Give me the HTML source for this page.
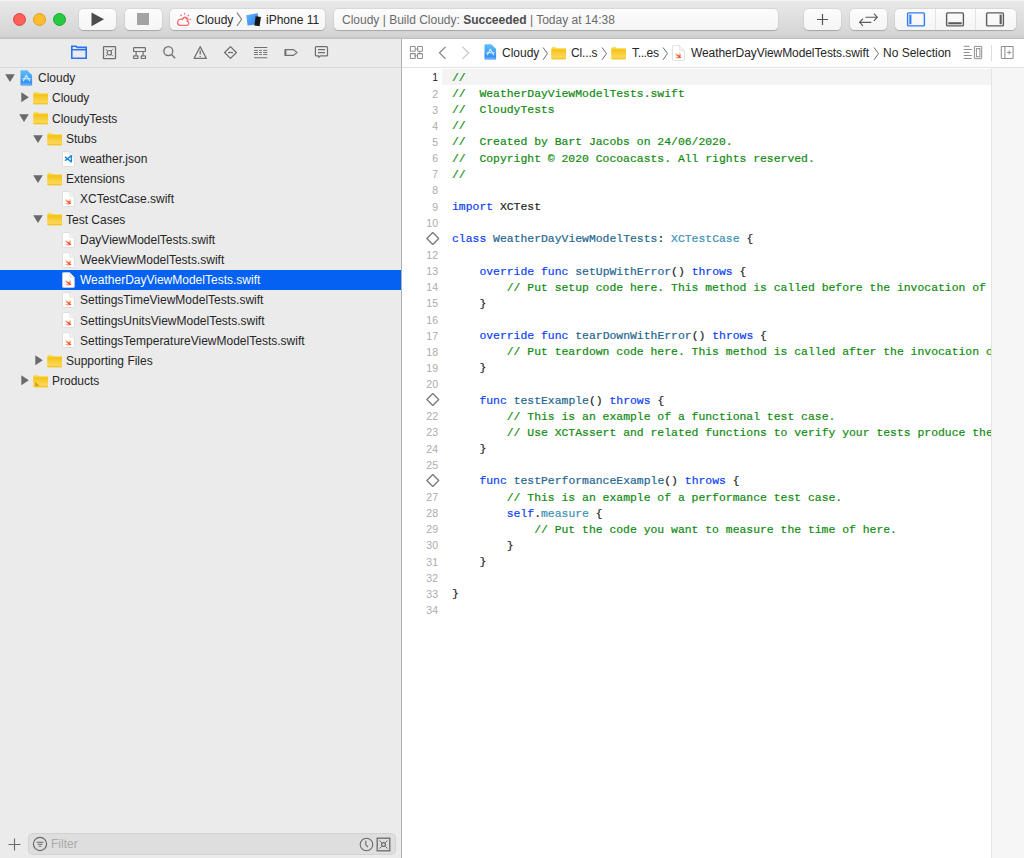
<!DOCTYPE html><html><head><meta charset="utf-8"><style>
*{margin:0;padding:0;box-sizing:border-box}
html,body{width:1024px;height:858px;overflow:hidden;background:#ebebeb;font-family:"Liberation Sans",sans-serif;}
.a{position:absolute}
#tb{position:absolute;left:0;top:0;width:1024px;height:39px;background:linear-gradient(#e9e9e9 0%,#d5d5d5 92%,#cacaca 100%);border-bottom:1px solid #c0c0c0}
#tb .hl{position:absolute;left:0;top:0;width:1024px;height:1px;background:#f2f2f2}
.light{position:absolute;top:13px;width:13px;height:13px;border-radius:50%}
.btn{position:absolute;top:8.7px;height:21.5px;background:linear-gradient(#fcfcfc,#f5f5f5);border-radius:4.5px;box-shadow:0 0 0 0.5px rgba(0,0,0,0.07),0 0.8px 0.9px rgba(0,0,0,0.2)}
.tt{position:absolute;font-size:12px;line-height:14px;white-space:nowrap}
#side{position:absolute;left:0;top:39px;width:401px;height:819px;background:#ebebeb}
#divv{position:absolute;left:401px;top:39px;width:1px;height:819px;background:#b0b0b0}
#navbar{position:absolute;left:0;top:39px;width:401px;height:29px;border-bottom:1px solid #d8d8d8}
.row{position:absolute;left:0;width:401px;height:20px}
.row .t{position:absolute;top:3px;font-size:12px;line-height:14px;color:#262626;white-space:nowrap}
#ed{position:absolute;left:402px;top:39px;width:622px;height:819px;background:#fff}
#jb{position:absolute;left:402px;top:39px;width:622px;height:29px;border-bottom:1px solid #e3e3e3;background:#fff}
#mini{position:absolute;left:991px;top:68px;width:33px;height:790px;background:#f6f6f6;border-left:1px solid #e4e4e4}
#curl{position:absolute;left:442px;top:69px;width:549px;height:16px;background:#f4f4f4}
.code{position:absolute;left:452px;font-family:"Liberation Mono",monospace;font-size:11.425px;white-space:pre;color:#1e1e1e;-webkit-text-stroke:0.2px currentColor}
.ln{position:absolute;left:410px;width:28px;text-align:right;font-size:10.5px;color:#a3a3a3;white-space:nowrap}
.k{color:#0b3ff5}
.c{color:#0f8a10}
.d{color:#24668f}
.o{color:#3a90b4}
</style></head><body><div id="tb"><div class="hl"></div></div>
<div class="light" style="left:13px;background:#fe5f57;border:0.5px solid #e2463f"></div>
<div class="light" style="left:33px;background:#febc2e;border:0.5px solid #e1a116"></div>
<div class="light" style="left:53px;background:#28c840;border:0.5px solid #1aab29"></div>
<div class="btn" style="left:79px;width:37px"></div>
<svg class="a" style="left:91px;top:12px" width="14" height="15"><path d="M0.5 0.5 L13 7.3 L0.5 14.2Z" fill="#4b4b4b"/></svg>
<div class="btn" style="left:125px;width:37px"></div>
<div class="a" style="left:137px;top:13px;width:12px;height:12px;background:#a3a3a3"></div>
<div class="btn" style="left:170px;width:155px"></div>
<div class="a" style="left:176px;top:11px;width:16px;height:16px;background:#fff"></div>
<svg class="a" style="left:176px;top:11px" width="16" height="16" viewBox="0 0 16 16"><g fill="none" stroke="#f76a67" stroke-width="1.25" stroke-linecap="round"><path d="M3.6 14.4H10.6A2.1 2.1 0 0 0 11.3 10.3A2.6 2.6 0 0 0 6.4 8.4A3.4 3.4 0 0 0 1.6 11.3A2.9 2.9 0 0 0 3.6 14.4Z"/><path d="M6.9 7.8A2.5 2.5 0 0 1 11.6 9.9"/><path d="M8.7 2.3V3M4.9 4.1L5.4 4.7M12.6 4.2L12.1 4.8M14 8.3H14.7"/></g></svg>
<div class="tt" style="left:196px;top:13px;color:#262626">Cloudy</div>
<svg class="a" style="left:236px;top:12px" width="7" height="15"><path d="M1 0.6 L5.6 7.3 L1 14" fill="none" stroke="#7a7a7a" stroke-width="1.05"/></svg>
<svg class="a" style="left:245px;top:12px" width="18" height="15" viewBox="0 0 18 15"><defs><linearGradient id="ig" x1="0" y1="0" x2="1" y2="1"><stop offset="0" stop-color="#62b5fb"/><stop offset="1" stop-color="#2f7ff0"/></linearGradient></defs><path d="M1.3 3.2L12.8 1.2L14.2 12L2.6 13.6Z" fill="url(#ig)"/><path d="M10.6 4.3L15.9 5L14.6 14.2L9.4 13.5Z" fill="#161616"/></svg>
<div class="tt" style="left:266px;top:13px;color:#262626">iPhone 11</div>
<div class="btn" style="left:334px;width:444px"></div>
<div class="tt" style="left:342px;top:13px;color:#6b6b6b">Cloudy | Build Cloudy: <b style="color:#4d4d4d">Succeeded</b> | Today at 14:38</div>
<div class="btn" style="left:804px;width:37px"></div>
<svg class="a" style="left:816px;top:13px" width="13" height="13"><path d="M6.5 1V12M1 6.5H12" stroke="#555" stroke-width="1.2"/></svg>
<div class="btn" style="left:850px;width:37px"></div>
<svg class="a" style="left:857px;top:11px" width="24" height="17" viewBox="0 0 24 17"><g fill="none" stroke="#5a5a5a" stroke-width="1.15"><path d="M8.5 6.2H20.3M16.9 2.6L20.3 6.2L16.9 9.8"/><path d="M14.3 11.3H2.6M6 7.7L2.6 11.3L6 14.9"/></g></svg>
<div class="btn" style="left:895px;width:121px"></div>
<div class="a" style="left:935px;top:9px;width:1px;height:21px;background:#e3e3e3"></div>
<div class="a" style="left:975px;top:9px;width:1px;height:21px;background:#e3e3e3"></div>
<svg class="a" style="left:906px;top:12px" width="20" height="16"><rect x="1.6" y="0.9" width="16.8" height="13" rx="1" fill="none" stroke="#2f7cf6" stroke-width="1.4"/><rect x="3.3" y="2.6" width="2.1" height="9.6" fill="#2f7cf6"/></svg>
<svg class="a" style="left:945px;top:12px" width="20" height="16"><rect x="1.6" y="0.9" width="16.8" height="13" rx="1" fill="none" stroke="#5c5c5c" stroke-width="1.4"/><rect x="3.3" y="10.2" width="13.4" height="2.1" fill="#5c5c5c"/></svg>
<svg class="a" style="left:985px;top:12px" width="20" height="16"><rect x="1.6" y="0.9" width="16.8" height="13" rx="1" fill="none" stroke="#5c5c5c" stroke-width="1.4"/><rect x="14.6" y="2.6" width="2.1" height="9.6" fill="#5c5c5c"/></svg>
<div id="side"></div>
<div id="navbar"></div>
<svg class="a" style="left:70px;top:44px" width="18" height="16" viewBox="0 0 18 16"><path d="M1.8 14.2V2.2H6L7.2 3.4H16.2V14.2Z M1.8 5.8H16.2" fill="none" stroke="#2a72f5" stroke-width="1.6"/></svg>
<svg class="a" style="left:102px;top:45px" width="15" height="15" viewBox="0 0 15 15"><g fill="none" stroke="#6f6f6f"><rect x="1.5" y="1.7" width="12" height="12" rx="0.4" stroke-width="1.3"/><circle cx="7.3" cy="7.7" r="2.2" stroke-width="1.2"/><path d="M3.8 4.2L5.6 6M10.8 4.2L9 6M3.8 11.2L5.6 9.4M10.8 11.2L9 9.4" stroke-width="1"/></g></svg>
<svg class="a" style="left:132px;top:46px" width="15" height="14" viewBox="0 0 15 14"><g fill="none" stroke="#6f6f6f" stroke-width="1.2"><rect x="1.6" y="1.7" width="11.8" height="3.8" rx=".6"/><path d="M4.1 5.5V9.2M11.1 5.5V9.2"/><rect x="1.6" y="9.8" width="4.3" height="2.7" rx=".6"/><rect x="9.2" y="9.8" width="4.3" height="2.7" rx=".6"/></g></svg>
<svg class="a" style="left:162px;top:45px" width="15" height="15" viewBox="0 0 15 15"><g fill="none" stroke="#6f6f6f" stroke-width="1.3"><circle cx="6.3" cy="6.1" r="4.5"/><path d="M9.5 9.5L13.2 13.2"/></g></svg>
<svg class="a" style="left:193px;top:45px" width="15" height="15" viewBox="0 0 15 15"><g fill="none" stroke="#6f6f6f" stroke-width="1.3" stroke-linejoin="round"><path d="M7.2 1.7L13.3 13.3H1.1Z"/><path d="M7.2 5.4V9.6M7.2 11V11.9"/></g></svg>
<svg class="a" style="left:223px;top:45px" width="15" height="15" viewBox="0 0 15 15"><g fill="none" stroke="#6f6f6f" stroke-width="1.3" stroke-linejoin="round"><path d="M7.5 1.6L13.4 7.5L7.5 13.4L1.6 7.5Z"/><path d="M5 7.5H10"/></g></svg>
<svg class="a" style="left:253px;top:46px" width="15" height="13" viewBox="0 0 15 13"><g fill="none" stroke="#6f6f6f"><path d="M1 1.5H14.3M1 11.7H14.3" stroke-width="1.1"/><path d="M1 4.4H5M6.1 4.4H8.9M10.2 4.4H14.3M1 6.5H5M6.1 6.5H8.9M10.2 6.5H14.3M1 8.5H5M6.1 8.5H8.9M10.2 8.5H14.3" stroke-width="0.95"/></g></svg>
<svg class="a" style="left:284px;top:48px" width="15" height="10" viewBox="0 0 15 10"><path d="M1.1 1.6H9.5L13 4.5L9.5 7.4H1.1Z" fill="none" stroke="#6f6f6f" stroke-width="1.2" stroke-linejoin="round"/><path d="M1.6 1.6V7.4" stroke="#6f6f6f" stroke-width="1.6"/></svg>
<svg class="a" style="left:314px;top:45px" width="15" height="15" viewBox="0 0 15 15"><g fill="none" stroke="#6f6f6f" stroke-width="1.2" stroke-linejoin="round"><path d="M2.3 1.6H12.6Q13.5 1.6 13.5 2.5V10Q13.5 10.9 12.6 10.9H6.5L4.8 12.3V10.9H2.3Q1.4 10.9 1.4 10V2.5Q1.4 1.6 2.3 1.6Z"/><path d="M4 4.6H11M4 7.7H11"/></g></svg>
<svg class="a" style="left:5px;top:74.0px" width="10" height="9"><path d="M0.2 0.3H9.8L5 8Z" fill="#6a6a6a"/></svg>
<svg class="a" style="left:20px;top:70.0px" width="13" height="16" viewBox="0 0 13 16"><defs><linearGradient id="pg" x1="0" y1="0" x2="0" y2="1"><stop offset="0" stop-color="#5fbdf6"/><stop offset="1" stop-color="#2c86f2"/></linearGradient></defs><path d="M1.3 0.3H7.2L12.1 5.1V14.7Q12.1 15.5 11.3 15.5H1.3Q0.5 15.5 0.5 14.7V1.1Q0.5 0.3 1.3 0.3Z" fill="url(#pg)"/><path d="M6.3 5.2L3.4 10.8M6.3 5.2L9.6 10.8M2.6 8.8H10.3" fill="none" stroke="#d8ecff" stroke-width="1.1" stroke-linecap="round"/><path d="M1.2 14.1H11.4" stroke="#8ccafb" stroke-width="0.9"/></svg>
<div class="a" style="left:38px;top:71.30px;font-size:12px;line-height:14px;color:#262626;white-space:nowrap">Cloudy</div>
<svg class="a" style="left:21px;top:92.19px" width="9" height="11"><path d="M0.3 0.3V10.3L7.8 5.3Z" fill="#6a6a6a"/></svg>
<svg class="a" style="left:33px;top:92.19px" width="16" height="13" viewBox="0 0 16 13"><defs><linearGradient id="fg" x1="0" y1="0" x2="0" y2="1"><stop offset="0" stop-color="#f4c214"/><stop offset="0.8" stop-color="#fcd85a"/><stop offset="1" stop-color="#eebb08"/></linearGradient></defs><path d="M0.4 1.0Q0.4 0.2 1.2 0.2H5.0L6.0 1.3H14.2Q15.0 1.3 15.0 2.1V11.5Q15.0 12.3 14.2 12.3H1.2Q0.4 12.3 0.4 11.5Z" fill="#fad544"/><path d="M0.4 2.3H15.0V11.5Q15.0 12.3 14.2 12.3H1.2Q0.4 12.3 0.4 11.5Z" fill="url(#fg)"/></svg>
<div class="a" style="left:52px;top:91.49px;font-size:12px;line-height:14px;color:#262626;white-space:nowrap">Cloudy</div>
<svg class="a" style="left:19px;top:114.38px" width="10" height="9"><path d="M0.2 0.3H9.8L5 8Z" fill="#6a6a6a"/></svg>
<svg class="a" style="left:33px;top:112.38px" width="16" height="13" viewBox="0 0 16 13"><defs><linearGradient id="fg" x1="0" y1="0" x2="0" y2="1"><stop offset="0" stop-color="#f4c214"/><stop offset="0.8" stop-color="#fcd85a"/><stop offset="1" stop-color="#eebb08"/></linearGradient></defs><path d="M0.4 1.0Q0.4 0.2 1.2 0.2H5.0L6.0 1.3H14.2Q15.0 1.3 15.0 2.1V11.5Q15.0 12.3 14.2 12.3H1.2Q0.4 12.3 0.4 11.5Z" fill="#fad544"/><path d="M0.4 2.3H15.0V11.5Q15.0 12.3 14.2 12.3H1.2Q0.4 12.3 0.4 11.5Z" fill="url(#fg)"/></svg>
<div class="a" style="left:52px;top:111.68px;font-size:12px;line-height:14px;color:#262626;white-space:nowrap">CloudyTests</div>
<svg class="a" style="left:33px;top:134.57px" width="10" height="9"><path d="M0.2 0.3H9.8L5 8Z" fill="#6a6a6a"/></svg>
<svg class="a" style="left:47px;top:132.57px" width="16" height="13" viewBox="0 0 16 13"><defs><linearGradient id="fg" x1="0" y1="0" x2="0" y2="1"><stop offset="0" stop-color="#f4c214"/><stop offset="0.8" stop-color="#fcd85a"/><stop offset="1" stop-color="#eebb08"/></linearGradient></defs><path d="M0.4 1.0Q0.4 0.2 1.2 0.2H5.0L6.0 1.3H14.2Q15.0 1.3 15.0 2.1V11.5Q15.0 12.3 14.2 12.3H1.2Q0.4 12.3 0.4 11.5Z" fill="#fad544"/><path d="M0.4 2.3H15.0V11.5Q15.0 12.3 14.2 12.3H1.2Q0.4 12.3 0.4 11.5Z" fill="url(#fg)"/></svg>
<div class="a" style="left:66px;top:131.87px;font-size:12px;line-height:14px;color:#262626;white-space:nowrap">Stubs</div>
<svg class="a" style="left:62px;top:150.76px" width="13" height="16" viewBox="0 0 13 16"><path d="M1.3 0.6H7.6L12.4 5.4V14.7Q12.4 15.5 11.6 15.5H1.3Q0.5 15.5 0.5 14.7V1.4Q0.5 0.6 1.3 0.6Z" fill="#fff" stroke="#d4d4d4" stroke-width="0.7"/><path d="M7.6 0.6V4.6Q7.6 5.4 8.4 5.4H12.4" fill="#f4f4f4" stroke="#dadada" stroke-width="0.6"/><path d="M3 5.9L9.4 10.9V4.6L3 9.7" fill="none" stroke="#1b85de" stroke-width="1.35" stroke-linejoin="round"/></svg>
<div class="a" style="left:80px;top:152.06px;font-size:12px;line-height:14px;color:#262626;white-space:nowrap">weather.json</div>
<svg class="a" style="left:33px;top:174.95px" width="10" height="9"><path d="M0.2 0.3H9.8L5 8Z" fill="#6a6a6a"/></svg>
<svg class="a" style="left:47px;top:172.95px" width="16" height="13" viewBox="0 0 16 13"><defs><linearGradient id="fg" x1="0" y1="0" x2="0" y2="1"><stop offset="0" stop-color="#f4c214"/><stop offset="0.8" stop-color="#fcd85a"/><stop offset="1" stop-color="#eebb08"/></linearGradient></defs><path d="M0.4 1.0Q0.4 0.2 1.2 0.2H5.0L6.0 1.3H14.2Q15.0 1.3 15.0 2.1V11.5Q15.0 12.3 14.2 12.3H1.2Q0.4 12.3 0.4 11.5Z" fill="#fad544"/><path d="M0.4 2.3H15.0V11.5Q15.0 12.3 14.2 12.3H1.2Q0.4 12.3 0.4 11.5Z" fill="url(#fg)"/></svg>
<div class="a" style="left:66px;top:172.25px;font-size:12px;line-height:14px;color:#262626;white-space:nowrap">Extensions</div>
<svg class="a" style="left:62px;top:191.14000000000001px" width="13" height="16" viewBox="0 0 13 16"><path d="M1.3 0.6H7.6L12.4 5.4V14.7Q12.4 15.5 11.6 15.5H1.3Q0.5 15.5 0.5 14.7V1.4Q0.5 0.6 1.3 0.6Z" fill="#fff" stroke="#d4d4d4" stroke-width="0.7"/><path d="M7.6 0.6V4.6Q7.6 5.4 8.4 5.4H12.4" fill="#f4f4f4" stroke="#dadada" stroke-width="0.6"/><defs><linearGradient id="sg" x1="0" y1="0" x2="0" y2="1"><stop offset="0" stop-color="#f9a03f"/><stop offset="1" stop-color="#f2331f"/></linearGradient></defs><g transform="translate(2.4 6.3)"><path d="M5.9 5.7C6.6 4.6 6.3 2.6 4.9 0.8C5.4 2.2 5.4 3.5 4.8 4.3C3.6 3.5 1.6 1.8 0.6 0.7C1.4 1.8 2.5 3 3.4 3.8C2.3 3.2 1.1 2.3 0.3 1.6C1.4 3.5 3.3 5.4 4.9 5.9C3.8 6.5 2.1 6.4 0.3 5.6C1.7 6.8 3.6 7.4 5.1 6.8C5.8 6.5 6.5 6.6 6.9 7C7 6.5 6.6 5.9 5.9 5.7Z" fill="url(#sg)"/></g></svg>
<div class="a" style="left:80px;top:192.44px;font-size:12px;line-height:14px;color:#262626;white-space:nowrap">XCTestCase.swift</div>
<svg class="a" style="left:33px;top:215.33px" width="10" height="9"><path d="M0.2 0.3H9.8L5 8Z" fill="#6a6a6a"/></svg>
<svg class="a" style="left:47px;top:213.33px" width="16" height="13" viewBox="0 0 16 13"><defs><linearGradient id="fg" x1="0" y1="0" x2="0" y2="1"><stop offset="0" stop-color="#f4c214"/><stop offset="0.8" stop-color="#fcd85a"/><stop offset="1" stop-color="#eebb08"/></linearGradient></defs><path d="M0.4 1.0Q0.4 0.2 1.2 0.2H5.0L6.0 1.3H14.2Q15.0 1.3 15.0 2.1V11.5Q15.0 12.3 14.2 12.3H1.2Q0.4 12.3 0.4 11.5Z" fill="#fad544"/><path d="M0.4 2.3H15.0V11.5Q15.0 12.3 14.2 12.3H1.2Q0.4 12.3 0.4 11.5Z" fill="url(#fg)"/></svg>
<div class="a" style="left:66px;top:212.63px;font-size:12px;line-height:14px;color:#262626;white-space:nowrap">Test Cases</div>
<svg class="a" style="left:62px;top:231.52px" width="13" height="16" viewBox="0 0 13 16"><path d="M1.3 0.6H7.6L12.4 5.4V14.7Q12.4 15.5 11.6 15.5H1.3Q0.5 15.5 0.5 14.7V1.4Q0.5 0.6 1.3 0.6Z" fill="#fff" stroke="#d4d4d4" stroke-width="0.7"/><path d="M7.6 0.6V4.6Q7.6 5.4 8.4 5.4H12.4" fill="#f4f4f4" stroke="#dadada" stroke-width="0.6"/><defs><linearGradient id="sg" x1="0" y1="0" x2="0" y2="1"><stop offset="0" stop-color="#f9a03f"/><stop offset="1" stop-color="#f2331f"/></linearGradient></defs><g transform="translate(2.4 6.3)"><path d="M5.9 5.7C6.6 4.6 6.3 2.6 4.9 0.8C5.4 2.2 5.4 3.5 4.8 4.3C3.6 3.5 1.6 1.8 0.6 0.7C1.4 1.8 2.5 3 3.4 3.8C2.3 3.2 1.1 2.3 0.3 1.6C1.4 3.5 3.3 5.4 4.9 5.9C3.8 6.5 2.1 6.4 0.3 5.6C1.7 6.8 3.6 7.4 5.1 6.8C5.8 6.5 6.5 6.6 6.9 7C7 6.5 6.6 5.9 5.9 5.7Z" fill="url(#sg)"/></g></svg>
<div class="a" style="left:80px;top:232.82px;font-size:12px;line-height:14px;color:#262626;white-space:nowrap">DayViewModelTests.swift</div>
<svg class="a" style="left:62px;top:251.71px" width="13" height="16" viewBox="0 0 13 16"><path d="M1.3 0.6H7.6L12.4 5.4V14.7Q12.4 15.5 11.6 15.5H1.3Q0.5 15.5 0.5 14.7V1.4Q0.5 0.6 1.3 0.6Z" fill="#fff" stroke="#d4d4d4" stroke-width="0.7"/><path d="M7.6 0.6V4.6Q7.6 5.4 8.4 5.4H12.4" fill="#f4f4f4" stroke="#dadada" stroke-width="0.6"/><defs><linearGradient id="sg" x1="0" y1="0" x2="0" y2="1"><stop offset="0" stop-color="#f9a03f"/><stop offset="1" stop-color="#f2331f"/></linearGradient></defs><g transform="translate(2.4 6.3)"><path d="M5.9 5.7C6.6 4.6 6.3 2.6 4.9 0.8C5.4 2.2 5.4 3.5 4.8 4.3C3.6 3.5 1.6 1.8 0.6 0.7C1.4 1.8 2.5 3 3.4 3.8C2.3 3.2 1.1 2.3 0.3 1.6C1.4 3.5 3.3 5.4 4.9 5.9C3.8 6.5 2.1 6.4 0.3 5.6C1.7 6.8 3.6 7.4 5.1 6.8C5.8 6.5 6.5 6.6 6.9 7C7 6.5 6.6 5.9 5.9 5.7Z" fill="url(#sg)"/></g></svg>
<div class="a" style="left:80px;top:253.01px;font-size:12px;line-height:14px;color:#262626;white-space:nowrap">WeekViewModelTests.swift</div>
<div class="a" style="left:0;top:269.90px;width:401px;height:20px;background:#0461f1"></div>
<svg class="a" style="left:62px;top:271.9px" width="13" height="16" viewBox="0 0 13 16"><path d="M1.3 0.6H7.6L12.4 5.4V14.7Q12.4 15.5 11.6 15.5H1.3Q0.5 15.5 0.5 14.7V1.4Q0.5 0.6 1.3 0.6Z" fill="#fff" stroke="#d4d4d4" stroke-width="0.7"/><path d="M7.6 0.6V4.6Q7.6 5.4 8.4 5.4H12.4" fill="#f4f4f4" stroke="#dadada" stroke-width="0.6"/><defs><linearGradient id="sg" x1="0" y1="0" x2="0" y2="1"><stop offset="0" stop-color="#f9a03f"/><stop offset="1" stop-color="#f2331f"/></linearGradient></defs><g transform="translate(2.4 6.3)"><path d="M5.9 5.7C6.6 4.6 6.3 2.6 4.9 0.8C5.4 2.2 5.4 3.5 4.8 4.3C3.6 3.5 1.6 1.8 0.6 0.7C1.4 1.8 2.5 3 3.4 3.8C2.3 3.2 1.1 2.3 0.3 1.6C1.4 3.5 3.3 5.4 4.9 5.9C3.8 6.5 2.1 6.4 0.3 5.6C1.7 6.8 3.6 7.4 5.1 6.8C5.8 6.5 6.5 6.6 6.9 7C7 6.5 6.6 5.9 5.9 5.7Z" fill="url(#sg)"/></g></svg>
<div class="a" style="left:80px;top:273.20px;font-size:12px;line-height:14px;color:#fff;white-space:nowrap">WeatherDayViewModelTests.swift</div>
<svg class="a" style="left:62px;top:292.09000000000003px" width="13" height="16" viewBox="0 0 13 16"><path d="M1.3 0.6H7.6L12.4 5.4V14.7Q12.4 15.5 11.6 15.5H1.3Q0.5 15.5 0.5 14.7V1.4Q0.5 0.6 1.3 0.6Z" fill="#fff" stroke="#d4d4d4" stroke-width="0.7"/><path d="M7.6 0.6V4.6Q7.6 5.4 8.4 5.4H12.4" fill="#f4f4f4" stroke="#dadada" stroke-width="0.6"/><defs><linearGradient id="sg" x1="0" y1="0" x2="0" y2="1"><stop offset="0" stop-color="#f9a03f"/><stop offset="1" stop-color="#f2331f"/></linearGradient></defs><g transform="translate(2.4 6.3)"><path d="M5.9 5.7C6.6 4.6 6.3 2.6 4.9 0.8C5.4 2.2 5.4 3.5 4.8 4.3C3.6 3.5 1.6 1.8 0.6 0.7C1.4 1.8 2.5 3 3.4 3.8C2.3 3.2 1.1 2.3 0.3 1.6C1.4 3.5 3.3 5.4 4.9 5.9C3.8 6.5 2.1 6.4 0.3 5.6C1.7 6.8 3.6 7.4 5.1 6.8C5.8 6.5 6.5 6.6 6.9 7C7 6.5 6.6 5.9 5.9 5.7Z" fill="url(#sg)"/></g></svg>
<div class="a" style="left:80px;top:293.39px;font-size:12px;line-height:14px;color:#262626;white-space:nowrap">SettingsTimeViewModelTests.swift</div>
<svg class="a" style="left:62px;top:312.28000000000003px" width="13" height="16" viewBox="0 0 13 16"><path d="M1.3 0.6H7.6L12.4 5.4V14.7Q12.4 15.5 11.6 15.5H1.3Q0.5 15.5 0.5 14.7V1.4Q0.5 0.6 1.3 0.6Z" fill="#fff" stroke="#d4d4d4" stroke-width="0.7"/><path d="M7.6 0.6V4.6Q7.6 5.4 8.4 5.4H12.4" fill="#f4f4f4" stroke="#dadada" stroke-width="0.6"/><defs><linearGradient id="sg" x1="0" y1="0" x2="0" y2="1"><stop offset="0" stop-color="#f9a03f"/><stop offset="1" stop-color="#f2331f"/></linearGradient></defs><g transform="translate(2.4 6.3)"><path d="M5.9 5.7C6.6 4.6 6.3 2.6 4.9 0.8C5.4 2.2 5.4 3.5 4.8 4.3C3.6 3.5 1.6 1.8 0.6 0.7C1.4 1.8 2.5 3 3.4 3.8C2.3 3.2 1.1 2.3 0.3 1.6C1.4 3.5 3.3 5.4 4.9 5.9C3.8 6.5 2.1 6.4 0.3 5.6C1.7 6.8 3.6 7.4 5.1 6.8C5.8 6.5 6.5 6.6 6.9 7C7 6.5 6.6 5.9 5.9 5.7Z" fill="url(#sg)"/></g></svg>
<div class="a" style="left:80px;top:313.58px;font-size:12px;line-height:14px;color:#262626;white-space:nowrap">SettingsUnitsViewModelTests.swift</div>
<svg class="a" style="left:62px;top:332.47px" width="13" height="16" viewBox="0 0 13 16"><path d="M1.3 0.6H7.6L12.4 5.4V14.7Q12.4 15.5 11.6 15.5H1.3Q0.5 15.5 0.5 14.7V1.4Q0.5 0.6 1.3 0.6Z" fill="#fff" stroke="#d4d4d4" stroke-width="0.7"/><path d="M7.6 0.6V4.6Q7.6 5.4 8.4 5.4H12.4" fill="#f4f4f4" stroke="#dadada" stroke-width="0.6"/><defs><linearGradient id="sg" x1="0" y1="0" x2="0" y2="1"><stop offset="0" stop-color="#f9a03f"/><stop offset="1" stop-color="#f2331f"/></linearGradient></defs><g transform="translate(2.4 6.3)"><path d="M5.9 5.7C6.6 4.6 6.3 2.6 4.9 0.8C5.4 2.2 5.4 3.5 4.8 4.3C3.6 3.5 1.6 1.8 0.6 0.7C1.4 1.8 2.5 3 3.4 3.8C2.3 3.2 1.1 2.3 0.3 1.6C1.4 3.5 3.3 5.4 4.9 5.9C3.8 6.5 2.1 6.4 0.3 5.6C1.7 6.8 3.6 7.4 5.1 6.8C5.8 6.5 6.5 6.6 6.9 7C7 6.5 6.6 5.9 5.9 5.7Z" fill="url(#sg)"/></g></svg>
<div class="a" style="left:80px;top:333.77px;font-size:12px;line-height:14px;color:#262626;white-space:nowrap">SettingsTemperatureViewModelTests.swift</div>
<svg class="a" style="left:35px;top:354.66px" width="9" height="11"><path d="M0.3 0.3V10.3L7.8 5.3Z" fill="#6a6a6a"/></svg>
<svg class="a" style="left:47px;top:354.66px" width="16" height="13" viewBox="0 0 16 13"><defs><linearGradient id="fg" x1="0" y1="0" x2="0" y2="1"><stop offset="0" stop-color="#f4c214"/><stop offset="0.8" stop-color="#fcd85a"/><stop offset="1" stop-color="#eebb08"/></linearGradient></defs><path d="M0.4 1.0Q0.4 0.2 1.2 0.2H5.0L6.0 1.3H14.2Q15.0 1.3 15.0 2.1V11.5Q15.0 12.3 14.2 12.3H1.2Q0.4 12.3 0.4 11.5Z" fill="#fad544"/><path d="M0.4 2.3H15.0V11.5Q15.0 12.3 14.2 12.3H1.2Q0.4 12.3 0.4 11.5Z" fill="url(#fg)"/></svg>
<div class="a" style="left:66px;top:353.96px;font-size:12px;line-height:14px;color:#262626;white-space:nowrap">Supporting Files</div>
<svg class="a" style="left:21px;top:374.85px" width="9" height="11"><path d="M0.3 0.3V10.3L7.8 5.3Z" fill="#6a6a6a"/></svg>
<svg class="a" style="left:33px;top:374.85px" width="16" height="13" viewBox="0 0 16 13"><defs><linearGradient id="fg" x1="0" y1="0" x2="0" y2="1"><stop offset="0" stop-color="#f4c214"/><stop offset="0.8" stop-color="#fcd85a"/><stop offset="1" stop-color="#eebb08"/></linearGradient></defs><path d="M0.4 1.0Q0.4 0.2 1.2 0.2H5.0L6.0 1.3H14.2Q15.0 1.3 15.0 2.1V11.5Q15.0 12.3 14.2 12.3H1.2Q0.4 12.3 0.4 11.5Z" fill="#fad544"/><path d="M0.4 2.3H15.0V11.5Q15.0 12.3 14.2 12.3H1.2Q0.4 12.3 0.4 11.5Z" fill="url(#fg)"/></svg>
<svg class="a" style="left:33px;top:374.85px" width="16" height="13"><path d="M2.2 6.8L6.2 11H2.2Z" fill="#b8860b" opacity="0.75"/></svg>
<div class="a" style="left:52px;top:374.15px;font-size:12px;line-height:14px;color:#262626;white-space:nowrap">Products</div>
<svg class="a" style="left:8px;top:838px" width="13" height="13"><path d="M6.5 0.5V12.5M0.5 6.5H12.5" stroke="#6a6a6a" stroke-width="1.1"/></svg>
<div class="a" style="left:28px;top:833px;width:368px;height:22px;border-radius:5px;background:#dedede;border:1px solid #d2d2d2"></div>
<svg class="a" style="left:32px;top:836px" width="16" height="16" viewBox="0 0 16 16"><g fill="none" stroke="#6a6a6a"><circle cx="8" cy="8" r="6.6" stroke-width="1.2"/><path d="M4.6 6.2H11.4M5.6 8.2H10.4M6.8 10.2H9.2" stroke-width="1.1"/></g></svg>
<div class="a" style="left:51px;top:837px;font-size:12px;line-height:14px;color:#aaaaaa">Filter</div>
<svg class="a" style="left:359px;top:837px" width="15" height="15" viewBox="0 0 15 15"><g fill="none" stroke="#6a6a6a" stroke-width="1.1"><circle cx="7.5" cy="7.5" r="6.3"/><path d="M6.8 3.8V7.8L9 10"/></g></svg>
<svg class="a" style="left:376px;top:837px" width="15" height="15" viewBox="0 0 15 15"><g fill="none" stroke="#6a6a6a"><rect x="1.2" y="1.2" width="12.6" height="12.6" stroke-width="1.3"/><circle cx="7.5" cy="7.5" r="1.9" stroke-width="1.2"/><path d="M3.5 3.5L5.8 5.8M11.5 3.5L9.2 5.8M3.5 11.5L5.8 9.2M11.5 11.5L9.2 9.2" stroke-width="1"/></g></svg>
<div id="divv"></div>
<div id="ed"></div>
<div id="jb"></div>
<svg class="a" style="left:409px;top:45px" width="15" height="15" viewBox="0 0 15 15"><g fill="none" stroke="#8e8e8e" stroke-width="1.05"><rect x="1.4" y="1.4" width="4.8" height="4.9" rx=".5"/><rect x="8.6" y="1.4" width="4.8" height="4.9" rx=".5"/><rect x="1.4" y="8.6" width="4.8" height="4.9" rx=".5"/><rect x="8.6" y="8.6" width="4.8" height="4.9" rx=".5"/><path d="M6.2 4H9.2M8.3 3.2L9.2 4L8.3 4.8M10.6 6.3V9.2M9.8 8.3L10.6 9.2L11.4 8.3M8.6 10.8H5.6M6.5 10L5.6 10.8L6.5 11.6" stroke-width="0.9"/></g></svg>
<svg class="a" style="left:438px;top:46px" width="9" height="14"><path d="M7.5 0.8L1.5 6.8L7.5 12.8" fill="none" stroke="#7d7d7d" stroke-width="1.2"/></svg>
<svg class="a" style="left:461px;top:46px" width="9" height="14"><path d="M1.5 0.8L7.5 6.8L1.5 12.8" fill="none" stroke="#c4c4c4" stroke-width="1.2"/></svg>
<svg class="a" style="left:484px;top:44px" width="13" height="16" viewBox="0 0 13 16"><defs><linearGradient id="pg" x1="0" y1="0" x2="0" y2="1"><stop offset="0" stop-color="#5fbdf6"/><stop offset="1" stop-color="#2c86f2"/></linearGradient></defs><path d="M1.3 0.3H7.2L12.1 5.1V14.7Q12.1 15.5 11.3 15.5H1.3Q0.5 15.5 0.5 14.7V1.1Q0.5 0.3 1.3 0.3Z" fill="url(#pg)"/><path d="M6.3 5.2L3.4 10.8M6.3 5.2L9.6 10.8M2.6 8.8H10.3" fill="none" stroke="#d8ecff" stroke-width="1.1" stroke-linecap="round"/><path d="M1.2 14.1H11.4" stroke="#8ccafb" stroke-width="0.9"/></svg>
<div class="a" style="left:502px;top:46px;font-size:12px;line-height:14px;color:#262626">Cloudy</div>
<svg class="a" style="left:542px;top:47px" width="7" height="14"><path d="M1 0.5L5.5 6.6L1 12.8" fill="none" stroke="#6e6e6e" stroke-width="1"/></svg>
<svg class="a" style="left:551px;top:47px" width="16" height="13" viewBox="0 0 16 13"><defs><linearGradient id="fg" x1="0" y1="0" x2="0" y2="1"><stop offset="0" stop-color="#f4c214"/><stop offset="0.8" stop-color="#fcd85a"/><stop offset="1" stop-color="#eebb08"/></linearGradient></defs><path d="M0.4 1.0Q0.4 0.2 1.2 0.2H5.0L6.0 1.3H14.2Q15.0 1.3 15.0 2.1V11.5Q15.0 12.3 14.2 12.3H1.2Q0.4 12.3 0.4 11.5Z" fill="#fad544"/><path d="M0.4 2.3H15.0V11.5Q15.0 12.3 14.2 12.3H1.2Q0.4 12.3 0.4 11.5Z" fill="url(#fg)"/></svg>
<div class="a" style="left:571px;top:46px;font-size:12px;line-height:14px;color:#262626;letter-spacing:-0.15px">Cl...s</div>
<svg class="a" style="left:601px;top:47px" width="7" height="14"><path d="M1 0.5L5.5 6.6L1 12.8" fill="none" stroke="#6e6e6e" stroke-width="1"/></svg>
<svg class="a" style="left:611px;top:47px" width="16" height="13" viewBox="0 0 16 13"><defs><linearGradient id="fg" x1="0" y1="0" x2="0" y2="1"><stop offset="0" stop-color="#f4c214"/><stop offset="0.8" stop-color="#fcd85a"/><stop offset="1" stop-color="#eebb08"/></linearGradient></defs><path d="M0.4 1.0Q0.4 0.2 1.2 0.2H5.0L6.0 1.3H14.2Q15.0 1.3 15.0 2.1V11.5Q15.0 12.3 14.2 12.3H1.2Q0.4 12.3 0.4 11.5Z" fill="#fad544"/><path d="M0.4 2.3H15.0V11.5Q15.0 12.3 14.2 12.3H1.2Q0.4 12.3 0.4 11.5Z" fill="url(#fg)"/></svg>
<div class="a" style="left:632px;top:46px;font-size:12px;line-height:14px;color:#262626;letter-spacing:-0.35px">T...es</div>
<svg class="a" style="left:662px;top:47px" width="7" height="14"><path d="M1 0.5L5.5 6.6L1 12.8" fill="none" stroke="#6e6e6e" stroke-width="1"/></svg>
<svg class="a" style="left:672px;top:45px" width="13" height="16" viewBox="0 0 13 16"><path d="M1.3 0.6H7.6L12.4 5.4V14.7Q12.4 15.5 11.6 15.5H1.3Q0.5 15.5 0.5 14.7V1.4Q0.5 0.6 1.3 0.6Z" fill="#fff" stroke="#d4d4d4" stroke-width="0.7"/><path d="M7.6 0.6V4.6Q7.6 5.4 8.4 5.4H12.4" fill="#f4f4f4" stroke="#dadada" stroke-width="0.6"/><defs><linearGradient id="sg" x1="0" y1="0" x2="0" y2="1"><stop offset="0" stop-color="#f9a03f"/><stop offset="1" stop-color="#f2331f"/></linearGradient></defs><g transform="translate(2.4 6.3)"><path d="M5.9 5.7C6.6 4.6 6.3 2.6 4.9 0.8C5.4 2.2 5.4 3.5 4.8 4.3C3.6 3.5 1.6 1.8 0.6 0.7C1.4 1.8 2.5 3 3.4 3.8C2.3 3.2 1.1 2.3 0.3 1.6C1.4 3.5 3.3 5.4 4.9 5.9C3.8 6.5 2.1 6.4 0.3 5.6C1.7 6.8 3.6 7.4 5.1 6.8C5.8 6.5 6.5 6.6 6.9 7C7 6.5 6.6 5.9 5.9 5.7Z" fill="url(#sg)"/></g></svg>
<div class="a" style="left:691px;top:46px;font-size:12px;line-height:14px;color:#262626;letter-spacing:-0.08px">WeatherDayViewModelTests.swift</div>
<svg class="a" style="left:873px;top:47px" width="7" height="14"><path d="M1 0.5L5.5 6.6L1 12.8" fill="none" stroke="#6e6e6e" stroke-width="1"/></svg>
<div class="a" style="left:883px;top:46px;font-size:12px;line-height:14px;color:#262626">No Selection</div>
<svg class="a" style="left:962px;top:45px" width="21" height="15" viewBox="0 0 21 15"><g fill="none" stroke="#8f8f8f" stroke-width="1"><path d="M1.7 1.3H7.6M1.7 4.5H9.8M1.7 7.5H7.6M1.7 10.5H9.8M1.7 13.5H9.8"/><rect x="12.4" y="1.4" width="7.3" height="12.3" rx=".4"/><rect x="14.4" y="3.6" width="3.5" height="8.2"/></g></svg>
<div class="a" style="left:991px;top:45px;width:1px;height:16px;background:#dcdcdc"></div>
<svg class="a" style="left:999px;top:45px" width="16" height="15" viewBox="0 0 16 15"><g fill="none" stroke="#8f8f8f" stroke-width="1.05"><rect x="2.3" y="1.5" width="11.8" height="11.9" rx=".5"/><path d="M5.9 1.5V13.4"/><path d="M10.2 5.3V9.7M8 7.5H12.4" stroke-width="0.95"/></g></svg>
<div id="mini"></div>
<div id="curl"></div>
<div class="a" style="left:402px;top:68px;width:589px;height:790px;overflow:hidden">
<div class="a" style="left:8px;top:3.40px;width:28px;text-align:right;font-size:10.5px;line-height:12px;color:#1a1a1a">1</div>
<div class="code" style="left:50px;top:1.90px;line-height:16px"><span class="c">//</span></div>
<div class="a" style="left:8px;top:19.54px;width:28px;text-align:right;font-size:10.5px;line-height:12px;color:#acacac">2</div>
<div class="code" style="left:50px;top:18.04px;line-height:16px"><span class="c">//  WeatherDayViewModelTests.swift</span></div>
<div class="a" style="left:8px;top:35.68px;width:28px;text-align:right;font-size:10.5px;line-height:12px;color:#acacac">3</div>
<div class="code" style="left:50px;top:34.18px;line-height:16px"><span class="c">//  CloudyTests</span></div>
<div class="a" style="left:8px;top:51.82px;width:28px;text-align:right;font-size:10.5px;line-height:12px;color:#acacac">4</div>
<div class="code" style="left:50px;top:50.32px;line-height:16px"><span class="c">//</span></div>
<div class="a" style="left:8px;top:67.96px;width:28px;text-align:right;font-size:10.5px;line-height:12px;color:#acacac">5</div>
<div class="code" style="left:50px;top:66.46px;line-height:16px"><span class="c">//  Created by Bart Jacobs on 24/06/2020.</span></div>
<div class="a" style="left:8px;top:84.10px;width:28px;text-align:right;font-size:10.5px;line-height:12px;color:#acacac">6</div>
<div class="code" style="left:50px;top:82.60px;line-height:16px"><span class="c">//  Copyright © 2020 Cocoacasts. All rights reserved.</span></div>
<div class="a" style="left:8px;top:100.24px;width:28px;text-align:right;font-size:10.5px;line-height:12px;color:#acacac">7</div>
<div class="code" style="left:50px;top:98.74px;line-height:16px"><span class="c">//</span></div>
<div class="a" style="left:8px;top:116.38px;width:28px;text-align:right;font-size:10.5px;line-height:12px;color:#acacac">8</div>
<div class="a" style="left:8px;top:132.52px;width:28px;text-align:right;font-size:10.5px;line-height:12px;color:#acacac">9</div>
<div class="code" style="left:50px;top:131.02px;line-height:16px"><span class="k">import</span> XCTest</div>
<div class="a" style="left:8px;top:148.66px;width:28px;text-align:right;font-size:10.5px;line-height:12px;color:#acacac">10</div>
<div class="code" style="left:50px;top:163.30px;line-height:16px"><span class="k">class</span> <span class="d">WeatherDayViewModelTests</span>: <span class="o">XCTestCase</span> {</div>
<div class="a" style="left:8px;top:180.94px;width:28px;text-align:right;font-size:10.5px;line-height:12px;color:#acacac">12</div>
<div class="a" style="left:8px;top:197.08px;width:28px;text-align:right;font-size:10.5px;line-height:12px;color:#acacac">13</div>
<div class="code" style="left:50px;top:195.58px;line-height:16px">    <span class="k">override</span> <span class="k">func</span> <span class="d">setUpWithError</span>() <span class="k">throws</span> {</div>
<div class="a" style="left:8px;top:213.22px;width:28px;text-align:right;font-size:10.5px;line-height:12px;color:#acacac">14</div>
<div class="code" style="left:50px;top:211.72px;line-height:16px">        <span class="c">// Put setup code here. This method is called before the invocation of each test method in the class.</span></div>
<div class="a" style="left:8px;top:229.36px;width:28px;text-align:right;font-size:10.5px;line-height:12px;color:#acacac">15</div>
<div class="code" style="left:50px;top:227.86px;line-height:16px">    }</div>
<div class="a" style="left:8px;top:245.50px;width:28px;text-align:right;font-size:10.5px;line-height:12px;color:#acacac">16</div>
<div class="a" style="left:8px;top:261.64px;width:28px;text-align:right;font-size:10.5px;line-height:12px;color:#acacac">17</div>
<div class="code" style="left:50px;top:260.14px;line-height:16px">    <span class="k">override</span> <span class="k">func</span> <span class="d">tearDownWithError</span>() <span class="k">throws</span> {</div>
<div class="a" style="left:8px;top:277.78px;width:28px;text-align:right;font-size:10.5px;line-height:12px;color:#acacac">18</div>
<div class="code" style="left:50px;top:276.28px;line-height:16px">        <span class="c">// Put teardown code here. This method is called after the invocation of each test method in the class.</span></div>
<div class="a" style="left:8px;top:293.92px;width:28px;text-align:right;font-size:10.5px;line-height:12px;color:#acacac">19</div>
<div class="code" style="left:50px;top:292.42px;line-height:16px">    }</div>
<div class="a" style="left:8px;top:310.06px;width:28px;text-align:right;font-size:10.5px;line-height:12px;color:#acacac">20</div>
<div class="code" style="left:50px;top:324.70px;line-height:16px">    <span class="k">func</span> <span class="d">testExample</span>() <span class="k">throws</span> {</div>
<div class="a" style="left:8px;top:342.34px;width:28px;text-align:right;font-size:10.5px;line-height:12px;color:#acacac">22</div>
<div class="code" style="left:50px;top:340.84px;line-height:16px">        <span class="c">// This is an example of a functional test case.</span></div>
<div class="a" style="left:8px;top:358.48px;width:28px;text-align:right;font-size:10.5px;line-height:12px;color:#acacac">23</div>
<div class="code" style="left:50px;top:356.98px;line-height:16px">        <span class="c">// Use XCTAssert and related functions to verify your tests produce the correct results.</span></div>
<div class="a" style="left:8px;top:374.62px;width:28px;text-align:right;font-size:10.5px;line-height:12px;color:#acacac">24</div>
<div class="code" style="left:50px;top:373.12px;line-height:16px">    }</div>
<div class="a" style="left:8px;top:390.76px;width:28px;text-align:right;font-size:10.5px;line-height:12px;color:#acacac">25</div>
<div class="code" style="left:50px;top:405.40px;line-height:16px">    <span class="k">func</span> <span class="d">testPerformanceExample</span>() <span class="k">throws</span> {</div>
<div class="a" style="left:8px;top:423.04px;width:28px;text-align:right;font-size:10.5px;line-height:12px;color:#acacac">27</div>
<div class="code" style="left:50px;top:421.54px;line-height:16px">        <span class="c">// This is an example of a performance test case.</span></div>
<div class="a" style="left:8px;top:439.18px;width:28px;text-align:right;font-size:10.5px;line-height:12px;color:#acacac">28</div>
<div class="code" style="left:50px;top:437.68px;line-height:16px">        <span class="k">self</span>.<span class="o">measure</span> {</div>
<div class="a" style="left:8px;top:455.32px;width:28px;text-align:right;font-size:10.5px;line-height:12px;color:#acacac">29</div>
<div class="code" style="left:50px;top:453.82px;line-height:16px">            <span class="c">// Put the code you want to measure the time of here.</span></div>
<div class="a" style="left:8px;top:471.46px;width:28px;text-align:right;font-size:10.5px;line-height:12px;color:#acacac">30</div>
<div class="code" style="left:50px;top:469.96px;line-height:16px">        }</div>
<div class="a" style="left:8px;top:487.60px;width:28px;text-align:right;font-size:10.5px;line-height:12px;color:#acacac">31</div>
<div class="code" style="left:50px;top:486.10px;line-height:16px">    }</div>
<div class="a" style="left:8px;top:503.74px;width:28px;text-align:right;font-size:10.5px;line-height:12px;color:#acacac">32</div>
<div class="a" style="left:8px;top:519.88px;width:28px;text-align:right;font-size:10.5px;line-height:12px;color:#acacac">33</div>
<div class="code" style="left:50px;top:518.38px;line-height:16px">}</div>
<div class="a" style="left:8px;top:536.02px;width:28px;text-align:right;font-size:10.5px;line-height:12px;color:#acacac">34</div>
</div>
<svg class="a" style="left:425px;top:230.90px" width="15" height="15" viewBox="0 0 15 15"><path d="M7.8 1.6L13.7 7.5L7.8 13.4L1.9 7.5Z" fill="none" stroke="#7b7b7b" stroke-width="1.35" stroke-linejoin="round"/></svg>
<svg class="a" style="left:425px;top:392.30px" width="15" height="15" viewBox="0 0 15 15"><path d="M7.8 1.6L13.7 7.5L7.8 13.4L1.9 7.5Z" fill="none" stroke="#7b7b7b" stroke-width="1.35" stroke-linejoin="round"/></svg>
<svg class="a" style="left:425px;top:473.00px" width="15" height="15" viewBox="0 0 15 15"><path d="M7.8 1.6L13.7 7.5L7.8 13.4L1.9 7.5Z" fill="none" stroke="#7b7b7b" stroke-width="1.35" stroke-linejoin="round"/></svg></body></html>
